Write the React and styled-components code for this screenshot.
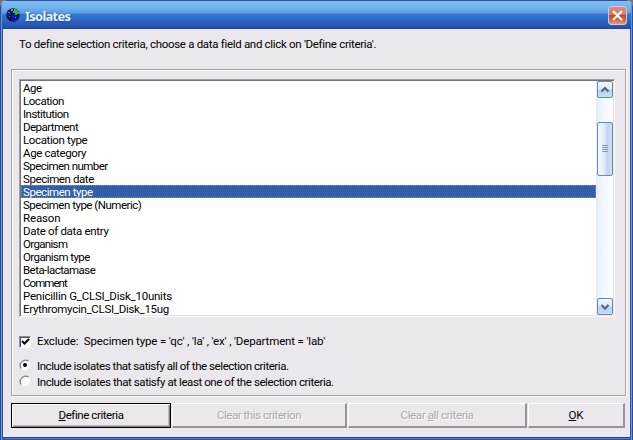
import React from "react";
import styled, { createGlobalStyle, css } from "styled-components";

const GlobalStyle = createGlobalStyle`
  * { box-sizing: border-box; }
  html, body { margin: 0; height: 100%; overflow: hidden; background: #76706f; }
`;

const Window = styled.main`
  width: 633px;
  height: 440px;
  display: flex;
  flex-direction: column;
  overflow: hidden;
  background: #ebe8ed;
  border-radius: 7px 7px 0 0;
  font: 11.5px/13px Roboto, sans-serif;
  color: #000;
`;

const TitleBar = styled.header`
  height: 29px;
  flex: none;
  display: flex;
  align-items: center;
  padding: 2px 6px 0 6px;
  background: linear-gradient(
    #2c4f96 0, #2c4f96 1px, #86bdf5 1px, #7ab8f0 3px, #6fb2ec 8px, #5f9fe6 12px, #4f8ee0 13.5px,
    #2f76cf 14px, #2f6fca 18px, #2a5cba 23px, #2852b0 27px, #24418f 29px
  );
  box-shadow: inset 1px 0 #2c4f96, inset 2px 0 #5d93df, inset -1px 0 #2c4f96, inset -2px 0 #5d93df;
`;

const Title = styled.h1`
  flex: 1;
  margin: 0 0 0 5px;
  font: bold 13px/18px "Noto Sans", sans-serif;
  letter-spacing: -0.75px;
  color: #e8f4ff;
  text-shadow: 1px 1px 1px #2453a4;
`;

const CloseButton = styled.button`
  width: 19px;
  height: 19px;
  padding: 0;
  border: 1px solid #c9cbe5;
  border-radius: 3px;
  background: linear-gradient(#d98c84 0, #d57868 45%, #c8452c 50%, #d66445 75%, #e69a80 100%);
  svg { display: block; }
`;

const Frame = styled.div`
  flex: 1;
  display: flex;
  flex-direction: column;
  box-shadow: inset 1px 0 #244b97, inset 2px 0 #6d9ae3, inset 3px 0 #2b55a8,
    inset -1px 0 #244b97, inset -2px 0 #6d9ae3, inset -3px 0 #2b55a8,
    inset 0 -1px #2c5599, inset 0 -2px #4a7ac8, inset 0 -3px #24468c;
  padding: 9px 7px 12px 11px;
`;

const Copy = styled.span`
  display: inline-block;
  white-space: pre;
  letter-spacing: ${({ $track = 0 }) => $track}px;
`;

const Intro = styled.p`
  height: 31px;
  margin: 0 0 0 8px;
`;

const Group = styled.section`
  height: 327px;
  flex: none;
  padding: 9px 10px 0 7px;
  border: 1px solid #a3a1a8;
  box-shadow: inset 1px 1px #fff, 1px 1px #fff;
`;

const ListBox = styled.div`
  height: 238px;
  display: flex;
  border: 1px solid;
  border-color: #a09da3 #fff #fff #a09da3;
  box-shadow: inset 1px 1px #77757b, inset -1px -1px #e4e2e6;
  padding: 1px;
  background: #fff;
`;

const List = styled.ul`
  flex: 1;
  margin: 0;
  padding: 0;
  list-style: none;
`;

const Row = styled.li`
  height: 13px;
  padding-left: 2px;
  line-height: 15px;
  ${({ $selected }) => $selected && css`
    color: #fff;
    background: #315fa9;
    outline: 1px dotted #7696bd;
    outline-offset: -1px;
  `}
`;

const Scrollbar = styled.div`
  width: 17px;
  padding-left: 1px;
  display: flex;
  flex-direction: column;
  background: linear-gradient(90deg, #e3edfb, #f4f9ff 50%, #fbfdff);
`;

const ScrollButton = styled.button`
  width: 16px;
  height: 17px;
  flex: none;
  padding: 0;
  border: 1px solid #6d87a4;
  border-radius: 2px;
  background: linear-gradient(#f1f8ff, #dceafb 45%, #b9d2ed 55%, #c8ddf3);
  svg { display: block; }
`;

const Track = styled.div`
  flex: 1;
  padding-top: 24px;
`;

const Thumb = styled.div`
  width: 16px;
  height: 54px;
  display: grid;
  place-items: center;
  border: 1px solid #6d87a4;
  border-radius: 2px;
  background: linear-gradient(90deg, #f4f9ff, #e2eefc 40%, #bdd4f0 70%, #cfe0f5);
`;

const Option = styled.label`
  display: flex;
  align-items: center;
  height: 15px;
  gap: 6px;
  margin-top: ${({ $gap }) => $gap}px;
`;

const Box = styled.span`
  width: 12px;
  height: 12px;
  display: grid;
  place-items: center;
  border: 1px solid;
  border-color: #8c8990 #fff #fff #8c8990;
  box-shadow: inset 1px 1px #56545a;
  background: #fff;
`;

const RadioMark = styled.svg`
  width: 12px;
  height: 12px;
  margin-bottom: 3px;
`;

const Actions = styled.footer`
  height: 25px;
  display: grid;
  grid-template-columns: 160px 175px 179px 97px;
  column-gap: 1px;
  margin-top: 7px;
`;

const ActionButton = styled.button`
  padding: 0;
  font: inherit;
  color: #000;
  background: #ebe8ed;
  border: solid;
  border-width: 1px 2px 2px 1px;
  border-color: #fff #96939b #96939b #fff;
  u { text-underline-offset: 1px; text-decoration-thickness: 1px; }
  ${({ $primary }) => $primary && css`
    border: 1px solid #000;
    box-shadow: inset 1px 1px #fff, inset -1px -1px #85828a, inset -2px -2px #b8b5bc;
  `}
  &:disabled {
    color: #aaa7ad;
    text-shadow: 1px 1px #fff;
  }
`;

const fields = [
  ["Age", -0.5], ["Location", -0.45], ["Institution", -0.55], ["Department", -0.55],
  ["Location type", -0.37], ["Age category", -0.36], ["Specimen number", -0.55],
  ["Specimen date", -0.41], ["Specimen type", -0.43], ["Specimen type (Numeric)", -0.49],
  ["Reason", -0.15], ["Date of data entry", -0.31], ["Organism", -0.66],
  ["Organism type", -0.58], ["Beta-lactamase", -0.55], ["Comment", -0.95],
  ["Penicillin G_CLSI_Disk_10units", -0.24], ["Erythromycin_CLSI_Disk_15ug", -0.3],
];

const Globe = () => (
  <svg width="14" height="16" viewBox="0 0 14 16">
    <circle cx="7" cy="7" r="6.7" fill="#07152c" />
    <path d="M3 3h3v2H5v2H3v1H1V5h2zM7 6h3v2h2v3h-2v2H6v-2H5V8h2z" fill="#1010c9" />
    <path d="M8 1h2v1h2v2h1v2h-2v1H9V5H7V3h1zM2 4h2v1H2zM3 8h1v1H3zM9 9h1v1H9z" fill="#35b936" />
    <path d="M5 1h2v2H5zM9 3h1v1H9z" fill="#55a5bb" />
  </svg>
);

const Chevron = ({ down }) => (
  <svg width="14" height="15" viewBox="0 0 14 15">
    <path d={down ? "M3.500 6l3.500 3.500L10.500 6" : "M3.500 9.500L7 6l3.500 3.500"} fill="none" stroke="#4c6580" strokeWidth="2" />
  </svg>
);

const Radio = ({ checked }) => (
  <RadioMark viewBox="0 0 12 12">
    <circle cx="6" cy="6" r="5" fill="#fff" />
    <path d="M2.300 9.700A5.300 5.300 0 0 1 9.700 2.300" fill="none" stroke="#858288" strokeWidth="1.300" />
    <path d="M2.300 9.700A5.300 5.300 0 0 0 9.700 2.300" fill="none" stroke="#fff" />
    {checked && <circle cx="6" cy="6" r="2" fill="#000" />}
  </RadioMark>
);

export default function App() {
  return (
    <Window>
      <GlobalStyle />
      <TitleBar>
        <Globe />
        <Title>Isolates</Title>
        <CloseButton aria-label="Close">
          <svg width="17" height="17" viewBox="0 0 17 17">
            <path d="M4 4l9 9M13 4l-9 9" stroke="#fff9ef" strokeWidth="2.200" />
          </svg>
        </CloseButton>
      </TitleBar>
      <Frame>
        <Intro>
          <Copy $track={-0.31}>To define selection criteria, choose a data field and click on 'Define criteria'.</Copy>
        </Intro>
        <Group>
          <ListBox>
            <List>
              {fields.map(([name, track]) => (
                <Row key={name} $selected={name === "Specimen type"}>
                  <Copy $track={track}>{name}</Copy>
                </Row>
              ))}
            </List>
            <Scrollbar>
              <ScrollButton aria-label="Scroll up"><Chevron /></ScrollButton>
              <Track>
                <Thumb>
                  <svg width="6" height="8" viewBox="0 0 6 8">
                    <path d="M0 .5h6M0 2.500h6M0 4.500h6M0 6.500h6" stroke="#7f9bbd" />
                  </svg>
                </Thumb>
              </Track>
              <ScrollButton aria-label="Scroll down"><Chevron down /></ScrollButton>
            </Scrollbar>
          </ListBox>
          <Option $gap={17}>
            <Box>
              <svg width="9" height="9" viewBox="0 0 9 9">
                <path d="M1 4l2.500 2.500L8 2" fill="none" stroke="#000" strokeWidth="2" />
              </svg>
            </Box>
            <Copy $track={-0.15}>{"Exclude:  Specimen type = 'qc' , 'la' , 'ex' , 'Department = 'lab'"}</Copy>
          </Option>
          <Option $gap={10}>
            <Radio checked />
            <Copy $track={-0.44}>Include isolates that satisfy all of the selection criteria.</Copy>
          </Option>
          <Option $gap={1}>
            <Radio />
            <Copy $track={-0.42}>Include isolates that satisfy at least one of the selection criteria.</Copy>
          </Option>
        </Group>
        <Actions>
          <ActionButton $primary><Copy $track={-0.42}><u>D</u>efine criteria</Copy></ActionButton>
          <ActionButton disabled><Copy $track={-0.45}>Clear this criterion</Copy></ActionButton>
          <ActionButton disabled><Copy $track={-0.37}>Clear <u>a</u>ll criteria</Copy></ActionButton>
          <ActionButton><Copy $track={-0.1}><u>O</u>K</Copy></ActionButton>
        </Actions>
      </Frame>
    </Window>
  );
}
